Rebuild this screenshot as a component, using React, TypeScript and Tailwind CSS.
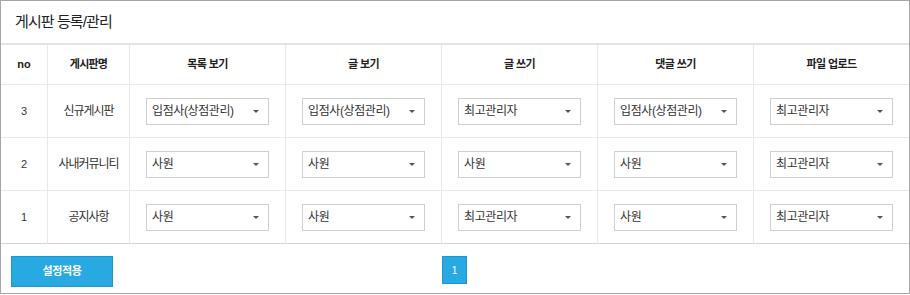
const FONT = '"Liberation Sans", "Noto Sans CJK KR", sans-serif'

const columns = ['목록 보기', '글 보기', '글 쓰기', '댓글 쓰기', '파일 업로드']

const boards = [
  { no: 3, name: '신규게시판', perms: ['입점사(상점관리)', '입점사(상점관리)', '최고관리자', '입점사(상점관리)', '최고관리자'] },
  { no: 2, name: '사내커뮤니티', perms: ['사원', '사원', '사원', '사원', '최고관리자'] },
  { no: 1, name: '공지사항', perms: ['사원', '사원', '최고관리자', '사원', '최고관리자'] },
]

function FakeSelect({ value }: { value: string }) {
  return (
    <div className="w-[123px] h-[27px] border border-[#cfcfcf] bg-white flex items-center justify-between pl-[5px] pr-[9px]">
      <span className="text-[12px] tracking-[-0.4px] text-[#333]">{value}</span>
      {/* caret */}
      <span className="w-0 h-0 border-l-[3px] border-r-[3px] border-t-[3px] border-l-transparent border-r-transparent border-t-[#555]" />
    </div>
  )
}

export default function App() {
  return (
    <div className="w-[910px] h-[294px] bg-white border border-[#a6a6a6] flex flex-col" style={{ fontFamily: FONT }}>
      {/* Title */}
      <div className="h-[44px] shrink-0 border-b-2 border-[#e3e3e3] flex items-center pl-[14px]">
        <h1 className="text-[15px] tracking-[-0.9px] text-[#222]">게시판 등록/관리</h1>
      </div>

      {/* Table */}
      <div className="grid grid-cols-[47px_82px_156px_156px_156px_156px_1fr]">
        <div className="h-[40px] border-r border-b border-[#e8e8e8] flex items-center justify-center text-[11px] font-bold text-[#222]">no</div>
        <div className="h-[40px] border-r border-b border-[#e8e8e8] flex items-center justify-center text-[11px] font-bold tracking-[-0.8px] text-[#222]">게시판명</div>
        {columns.map((c, i) => (
          <div
            key={c}
            className={`h-[40px] border-b border-[#e8e8e8] flex items-center justify-center text-[11px] font-bold tracking-[-0.6px] text-[#222] ${i < 4 ? 'border-r' : ''}`}
          >
            {c}
          </div>
        ))}

        {boards.map((b, r) => (
          <div key={b.no} className="contents">
            <div className={`h-[53px] border-r border-b ${r === 2 ? 'border-b-[#d6d6d6]' : ''} border-[#e8e8e8] flex items-center justify-center text-[11px] text-[#333]`}>
              {b.no}
            </div>
            <div className={`h-[53px] border-r border-b ${r === 2 ? 'border-b-[#d6d6d6]' : ''} border-[#e8e8e8] flex items-center justify-center text-[12px] tracking-[-1px] text-[#333]`}>
              {b.name}
            </div>
            {b.perms.map((p, i) => (
              <div
                key={i}
                className={`h-[53px] border-b ${r === 2 ? 'border-b-[#d6d6d6]' : ''} border-[#e8e8e8] flex items-center pl-[16px] ${i < 4 ? 'border-r' : ''}`}
              >
                <FakeSelect value={p} />
              </div>
            ))}
          </div>
        ))}
      </div>

      {/* Footer */}
      <div className="relative flex-1 pt-[12px] pl-[10px]">
        <button className="w-[102px] h-[31px] bg-[#29a9e1] border border-[#1f97cf] text-white text-[11px] font-bold tracking-[-0.4px]">
          설정적용
        </button>
        <div className="absolute left-[441px] top-[12px] w-[25px] h-[28px] bg-[#29a9e1] border border-[#1f97cf] flex items-center justify-center text-white text-[10px]">
          1
        </div>
      </div>
    </div>
  )
}
